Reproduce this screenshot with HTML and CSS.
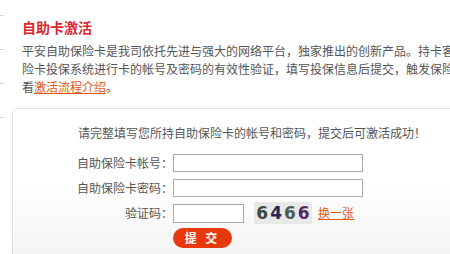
FILE: index.html
```html
<!DOCTYPE html>
<html lang="zh-CN">
<head>
<meta charset="utf-8">
<title>自助卡激活</title>
<link rel="stylesheet" href="styles.css">
</head>
<body>
<div class="layout">
  <div class="side">
    <div class="tick t1"></div>
    <div class="tick"></div>
    <div class="tick"></div>
    <div class="tick"></div>
  </div>
  <div class="main">
    <h1 class="title">自助卡激活</h1>
    <p class="intro">
      <span class="line">平安自助保险卡是我司依托先进与强大的网络平台，独家推出的创新产品。持卡客</span>
      <span class="line">险卡投保系统进行卡的帐号及密码的有效性验证，填写投保信息后提交，触发保险</span>
      <span class="line">看<a class="link" href="#">激活流程介绍</a>。</span>
    </p>
    <div class="box">
      <p class="hint">请完整填写您所持自助保险卡的帐号和密码，提交后可激活成功！</p>
      <form class="form">
        <div class="row">
          <label class="label">自助保险卡帐号：</label>
          <input class="field" type="text">
        </div>
        <div class="row r2">
          <label class="label">自助保险卡密码：</label>
          <input class="field" type="password">
        </div>
        <div class="row r3">
          <label class="label">验证码：</label>
          <input class="field small" type="text">
          <span class="captcha"><span class="d1">6</span><span class="d2">4</span><span class="d3">6</span><span class="d4">6</span></span>
          <a class="link swap" href="#">换一张</a>
        </div>
        <div class="row r4">
          <span class="label"></span>
          <button class="submit" type="button">提&nbsp;交</button>
        </div>
      </form>
    </div>
  </div>
</div>
</body>
</html>
```

FILE: styles.css
```css
html {
  overflow: hidden;
}
body {
  margin: 0;
  background: #fff;
  font-family: "Noto Sans CJK SC", "Liberation Sans", sans-serif;
  font-size: 12px;
  color: #555;
}
.layout {
  display: flex;
  width: 450px;
  height: 254px;
  overflow: hidden;
}
.side {
  width: 4px;
  flex: none;
  margin-right: 8px;
}
.tick {
  height: 33px;
  border-bottom: 1px solid #d8d8d8;
}
.t1 {
  height: 15px;
}
.main {
  flex: none;
  width: 500px;
  padding-top: 18px;
}
.title {
  margin: 0 0 6px 10px;
  font-size: 14px;
  line-height: 18px;
  font-weight: bold;
  color: #d9272e;
}
.intro {
  margin: 0 0 12px 10px;
  line-height: 18px;
}
.line {
  display: block;
  white-space: nowrap;
}
.link {
  color: #e05a10;
  text-decoration: underline;
}
.box {
  border: 1px solid #e2e2e2;
  border-top-left-radius: 6px;
  background: linear-gradient(#ffffff 45%, #f1f1f1 100%);
  padding: 15px 0 0 0;
  height: 150px;
}
.hint {
  margin: 0 0 12px 65px;
  line-height: 18px;
  white-space: nowrap;
}
.form {
  margin: 0 0 0 63px;
  display: flex;
  flex-direction: column;
}
.row {
  display: flex;
  align-items: center;
  height: 18px;
}
.r2 {
  margin-top: 7px;
}
.r3 {
  margin-top: 5px;
  height: 22px;
}
.r4 {
  margin-top: 4px;
  height: 20px;
}
.label {
  width: 97px;
  flex: none;
  text-align: right;
  white-space: nowrap;
  line-height: 18px;
}
.field {
  box-sizing: border-box;
  width: 190px;
  height: 18px;
  margin: 0;
  padding: 0 2px;
  border: 1px solid #a9a9a9;
  background: #fff;
  font-size: 12px;
}
.r3 .field {
  height: 19px;
  margin-top: 1px;
}
.field.small {
  width: 71px;
}
.captcha {
  margin-left: 10px;
  width: 58px;
  height: 22px;
  background: #e8e8e8;
  display: flex;
  align-items: center;
  justify-content: center;
  gap: 2px;
  font-family: "DejaVu Sans", "Liberation Sans", sans-serif;
  font-weight: bold;
  font-size: 17px;
  line-height: 22px;
}
.d1 { color: #3c4a3e; }
.d2 { color: #262456; }
.d3 { color: #4c5c54; }
.d4 { color: #56285e; }
.swap {
  margin-left: 6px;
  line-height: 18px;
}
.submit {
  width: 59px;
  height: 20px;
  margin: 0;
  padding: 0;
  border: none;
  border-radius: 10px;
  background: #e8390e;
  color: #fff;
  font-family: "Noto Sans CJK SC", sans-serif;
  font-size: 12px;
  font-weight: bold;
  letter-spacing: 3px;
  line-height: 20px;
}
```
